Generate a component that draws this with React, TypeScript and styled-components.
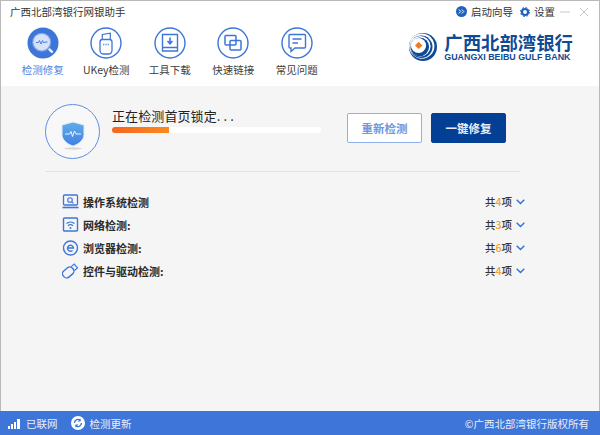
import React from 'react';
import styled, { createGlobalStyle } from 'styled-components';

const GlobalStyle = createGlobalStyle`
  html, body {
    margin: 0;
    padding: 0;
    background: #fff;
  }
  * {
    box-sizing: border-box;
  }
`;

const FONT = `"Noto Sans CJK SC", "Liberation Sans", sans-serif`;
const BLUE = '#3e75d9';

const Window = styled.div`
  width: 600px;
  height: 435px;
  display: flex;
  flex-direction: column;
  font-family: ${FONT};
  color: #333;
  background: #fff;
  border: 1px solid #b9b9b9;
  border-bottom: 0;
`;

const Header = styled.header`
  height: 85px;
  display: flex;
  flex-direction: column;
  flex-shrink: 0;
`;

const TitleBar = styled.div`
  height: 21px;
  display: flex;
  align-items: center;
  justify-content: space-between;
  padding: 0 10px 0 9px;
`;

const Title = styled.div`
  font-size: 10.5px;
  color: #333;
`;

const Controls = styled.div`
  display: flex;
  align-items: center;
`;

const ControlLink = styled.div`
  display: flex;
  align-items: center;
  gap: 4px;
  font-size: 10.5px;
  margin-right: 7px;
`;

const WindowButtons = styled.div`
  display: flex;
  gap: 9px;
  margin-left: -2px;
`;

const WindowButton = styled.svg`
  width: 10px;
  height: 10px;
  display: block;
`;

const ToolRow = styled.div`
  flex: 1;
  display: flex;
  justify-content: space-between;
`;

const Nav = styled.nav`
  display: flex;
  padding-left: 10px;
  padding-top: 5px;
`;

const NavItem = styled.div<{ $active?: boolean }>`
  width: 63.5px;
  display: flex;
  flex-direction: column;
  align-items: center;
  gap: 5px;
  font-size: 10.5px;
  line-height: 12px;
  color: ${(p) => (p.$active ? '#4f82dd' : '#3d3d3d')};
`;

const NavCircle = styled.svg`
  width: 32px;
  height: 32px;
  display: block;
`;

const Logo = styled.div`
  display: flex;
  align-items: flex-start;
  gap: 7px;
  padding: 11px 26px 0 0;
`;

const LogoText = styled.div`
  display: flex;
  flex-direction: column;
  color: #0f4a94;
`;

const LogoCn = styled.div`
  font-size: 18.4px;
  line-height: 18px;
  height: 18px;
  font-weight: 700;
  white-space: nowrap;
`;

const LogoEn = styled.div`
  font-family: "Liberation Sans", sans-serif;
  font-size: 8.9px;
  line-height: 10px;
  margin-top: 1px;
  font-weight: 700;
  white-space: nowrap;
`;

const Main = styled.main`
  flex: 1;
  background: #f5f5f5;
  padding: 18px 79px 0 44px;
`;

const StatusRow = styled.section`
  display: flex;
  align-items: flex-start;
  padding-bottom: 12px;
  border-bottom: 1px solid #e4e4e4;
`;

const Badge = styled.div`
  width: 55px;
  height: 55px;
  border-radius: 50%;
  border: 1.5px solid #5c8fe6;
  background: #f8f8f8;
  display: flex;
  align-items: center;
  justify-content: center;
  flex-shrink: 0;
`;

const ShieldIcon = styled.svg`
  display: block;
  margin-top: 5px;
`;

const Progress = styled.div`
  width: 209px;
  margin-left: 12px;
  padding-top: 3px;
`;

const ProgressLabel = styled.div`
  font-size: 13px;
  line-height: 18px;
  color: #222;
  letter-spacing: 0.1px;
  white-space: nowrap;
`;

const Track = styled.div`
  margin-top: 2px;
  height: 6px;
  border-radius: 3px;
  background: #fff;
  overflow: hidden;
`;

const Fill = styled.div`
  height: 100%;
  background: linear-gradient(90deg, #f4661f, #fb8a1f);
`;

const Buttons = styled.div`
  margin-left: 26px;
  padding-top: 9px;
  display: flex;
  gap: 9px;
`;

const Button = styled.button<{ $primary?: boolean }>`
  width: 75px;
  height: 30px;
  padding: 0;
  border-radius: 2px;
  font-family: ${FONT};
  font-size: 11.5px;
  font-weight: 700;
  color: ${(p) => (p.$primary ? '#e8ecf5' : '#6f97dc')};
  background: ${(p) => (p.$primary ? '#043f96' : '#fff')};
  border: 1px solid ${(p) => (p.$primary ? '#043f96' : '#8fb0ea')};
`;

const CheckList = styled.ul`
  list-style: none;
  margin: 18px -5px 0 17px;
  padding: 0;
`;

const CheckRow = styled.li`
  height: 23px;
  display: flex;
  align-items: center;
  font-size: 10.5px;
`;

const CheckIcon = styled.svg`
  width: 17px;
  height: 17px;
  margin-right: 4px;
  flex-shrink: 0;
  display: block;
`;

const CheckName = styled.div`
  flex: 1;
  font-size: 11px;
  font-weight: 700;
  color: #2b2b2b;
`;

const Count = styled.div`
  color: #333;
  font-weight: 500;
`;

const CountNum = styled.span`
  color: #fba02c;
`;

const Chevron = styled.svg`
  width: 9px;
  height: 6px;
  margin-left: 4px;
  display: block;
`;

const Footer = styled.footer`
  height: 24px;
  flex-shrink: 0;
  margin: 0 -1px;
  background: ${BLUE};
  color: #e9effa;
  display: flex;
  align-items: center;
  justify-content: space-between;
  padding: 0 11px 0 8px;
  font-size: 10.5px;
`;

const FooterGroup = styled.div`
  display: flex;
  align-items: center;
`;

const FooterIcon = styled.svg<{ $left?: number }>`
  display: block;
  margin-left: ${(p) => p.$left || 0}px;
  margin-right: 5px;
`;

const navIcons: React.ReactNode[] = [
  <>
    <circle cx="16" cy="16" r="15.500" fill={BLUE} />
    <circle cx="14.700" cy="15.200" r="9.500" fill="#fff" opacity="0.35" />
    <circle cx="14.700" cy="15.200" r="8.300" fill="#d5e2f8" />
    <path d="M9 15.500h2.500l1-2 1.500 3.500 1.500-3.500 1.500 2.500 1-1h2.500" fill="none" stroke={BLUE} strokeWidth="0.900" />
    <path d="M22.500 22.500l2.500 2.300" stroke="#eef3fc" strokeWidth="2.400" strokeLinecap="round" />
  </>,
  <>
    <circle cx="16" cy="16" r="15" fill="none" stroke={BLUE} strokeWidth="1.400" />
    <path d="M12.300 12.500V7.500l8-1.300v6.300" fill="none" stroke={BLUE} strokeWidth="1.200" />
    <path d="M10 15a2.500 2.500 0 0 1 2.500-2.500h7A2.500 2.500 0 0 1 22 15v8.500a3.500 3.500 0 0 1-3.500 3.500h-5a3.500 3.500 0 0 1-3.500-3.500z" fill="none" stroke={BLUE} strokeWidth="1.300" />
    <path d="M13 17.500h6" stroke={BLUE} strokeWidth="1.600" strokeDasharray="1 0.700" opacity="0.8" />
  </>,
  <>
    <circle cx="16" cy="16" r="15" fill="none" stroke={BLUE} strokeWidth="1.400" />
    <path d="M8.500 7.500h15v16.500h-15zM8.500 20.500h15" fill="none" stroke={BLUE} strokeWidth="1.400" />
    <path d="M16 10.500v5.500M13.500 14l2.500 2.800 2.500-2.800" fill="none" stroke={BLUE} strokeWidth="1.600" />
  </>,
  <>
    <circle cx="16" cy="16" r="15" fill="none" stroke={BLUE} strokeWidth="1.400" />
    <rect x="8" y="8.500" width="11" height="9.500" rx="1" fill="none" stroke={BLUE} strokeWidth="1.500" />
    <rect x="13" y="13.500" width="11" height="9.500" rx="1" fill="none" stroke={BLUE} strokeWidth="1.500" />
  </>,
  <>
    <circle cx="16" cy="16" r="15" fill="none" stroke={BLUE} strokeWidth="1.400" />
    <path d="M9 7.500h14.500a1 1 0 0 1 1 1V20a1 1 0 0 1-1 1H14l-4 3.500V21H9a1 1 0 0 1-1-1V8.500a1 1 0 0 1 1-1z" fill="none" stroke={BLUE} strokeWidth="1.400" />
    <path d="M11.500 12h9M11.500 16h5.500" stroke={BLUE} strokeWidth="1.400" />
  </>,
];

const navLabels = ['检测修复', 'UKey检测', '工具下载', '快速链接', '常见问题'];

const checks: { name: string; count: number; icon: React.ReactNode }[] = [
  {
    name: '操作系统检测',
    count: 4,
    icon: (
      <>
        <rect x="1.500" y="2" width="14" height="10" rx="1" fill="none" stroke={BLUE} strokeWidth="1.300" />
        <circle cx="8" cy="7" r="2.300" fill="none" stroke={BLUE} strokeWidth="1.100" />
        <path d="M9.800 8.800l1.700 1.500" stroke={BLUE} strokeWidth="1.100" />
        <path d="M0.500 14.500h16" stroke={BLUE} strokeWidth="1.600" />
      </>
    ),
  },
  {
    name: '网络检测:',
    count: 3,
    icon: (
      <>
        <rect x="1.500" y="2" width="14" height="13" rx="1" fill="none" stroke={BLUE} strokeWidth="1.400" />
        <path d="M4.500 7.500c2.300-2 5.700-2 8 0M6 9.700c1.500-1.200 3.500-1.200 5 0" fill="none" stroke={BLUE} strokeWidth="1.200" />
        <circle cx="8.500" cy="12" r="1" fill={BLUE} />
      </>
    ),
  },
  {
    name: '浏览器检测:',
    count: 6,
    icon: (
      <>
        <circle cx="8.500" cy="9" r="7" fill="none" stroke={BLUE} strokeWidth="1.400" />
        <path d="M5.500 9h6a3 3 0 1 0-1 2.500" fill="none" stroke={BLUE} strokeWidth="1.400" />
      </>
    ),
  },
  {
    name: '控件与驱动检测:',
    count: 4,
    icon: (
      <g transform="rotate(50 8.500 8.500)">
        <rect x="4.500" y="5.500" width="8" height="12" rx="3.500" fill="none" stroke={BLUE} strokeWidth="1.400" />
        <path d="M6 5.500V1.500h5v4" fill="none" stroke={BLUE} strokeWidth="1.200" />
      </g>
    ),
  },
];

function App() {
  return (
    <>
      <GlobalStyle />
      <Window>
        <Header>
          <TitleBar>
            <Title>广西北部湾银行网银助手</Title>
            <Controls>
              <ControlLink>
                <svg width="11" height="11" viewBox="0 0 11 11">
                  <circle cx="5.500" cy="5.500" r="5.500" fill="#1f62c0" />
                  <path d="M2.800 3.500l2 2-2 2M5.800 3.500l2 2-2 2" fill="none" stroke="#fff" strokeWidth="1" />
                </svg>
                启动向导
              </ControlLink>
              <ControlLink>
                <svg width="10" height="10" viewBox="0 0 10 10">
                  <circle cx="5" cy="5" r="3" fill="none" stroke="#1f62c0" strokeWidth="2.200" />
                  <circle cx="5" cy="5" r="4.500" fill="none" stroke="#1f62c0" strokeWidth="1" strokeDasharray="1.800 1.730" />
                </svg>
                设置
              </ControlLink>
              <WindowButtons>
                <WindowButton viewBox="0 0 10 10">
                  <path d="M0 5h10" stroke="#c9c9c9" strokeWidth="1" />
                </WindowButton>
                <WindowButton viewBox="0 0 10 10">
                  <path d="M1 1l8 8M9 1l-8 8" stroke="#c9c9c9" strokeWidth="1" />
                </WindowButton>
              </WindowButtons>
            </Controls>
          </TitleBar>
          <ToolRow>
            <Nav>
              {navLabels.map((label, i) => (
                <NavItem key={label} $active={i === 0}>
                  <NavCircle viewBox="0 0 32 32">{navIcons[i]}</NavCircle>
                  {label}
                </NavItem>
              ))}
            </Nav>
            <Logo>
              <svg width="28" height="28" viewBox="0 0 28 28">
                <circle cx="14" cy="14" r="14" fill="#0f4a94" />
                <circle cx="12.800" cy="13.200" r="12.600" fill="#fff" />
                <circle cx="12.300" cy="13.800" r="11.200" fill="#0f4a94" />
                <circle cx="11.300" cy="13.200" r="10.300" fill="#fff" />
                <circle cx="10.800" cy="13.800" r="9.300" fill="#0f4a94" />
                <circle cx="9.500" cy="12.500" r="7.600" fill="#fff" />
                <path d="M9.700 8.700l3.700 3.700-3.700 3.700-3.700-3.700z" fill="#ee7a22" />
              </svg>
              <LogoText>
                <LogoCn>广西北部湾银行</LogoCn>
                <LogoEn>GUANGXI BEIBU GULF BANK</LogoEn>
              </LogoText>
            </Logo>
          </ToolRow>
        </Header>
        <Main>
          <StatusRow>
            <Badge>
              <ShieldIcon width="26" height="32" viewBox="0 0 26 32">
                <defs>
                  <linearGradient id="shield" x1="0" y1="0" x2="0" y2="1">
                    <stop offset="0" stopColor="#63ade9" />
                    <stop offset="1" stopColor="#3f80e4" />
                  </linearGradient>
                </defs>
                <ellipse cx="13" cy="30.500" rx="9" ry="1.200" fill="#d8d8d8" />
                <path d="M13 4l11 3v9.500C24 22 19 26 13 28 7 26 2 22 2 16.500V7z" fill="url(#shield)" stroke="#e0ebf8" strokeWidth="1" />
                <path d="M5 16h4.500l1.500-2.500 1.500 5 2-5.500 1.500 3h5" fill="none" stroke="#fff" strokeWidth="0.900" />
              </ShieldIcon>
            </Badge>
            <Progress>
              <ProgressLabel>正在检测首页锁定. . .</ProgressLabel>
              <Track>
                <Fill style={{ width: `${(57 / 209) * 100}%` }} />
              </Track>
            </Progress>
            <Buttons>
              <Button>重新检测</Button>
              <Button $primary>一键修复</Button>
            </Buttons>
          </StatusRow>
          <CheckList>
            {checks.map((c) => (
              <CheckRow key={c.name}>
                <CheckIcon viewBox="0 0 17 17">{c.icon}</CheckIcon>
                <CheckName>{c.name}</CheckName>
                <Count>
                  共<CountNum>{c.count}</CountNum>项
                </Count>
                <Chevron viewBox="0 0 9 6">
                  <path d="M0.700 0.800L4.500 4.500 8.300 0.800" fill="none" stroke="#2f6fdc" strokeWidth="1.400" />
                </Chevron>
              </CheckRow>
            ))}
          </CheckList>
        </Main>
        <Footer>
          <FooterGroup>
            <FooterIcon width="13" height="11" viewBox="0 0 13 11">
              <path d="M0 8h2v3H0zM3 6h2v5H3zM6 4h2v7H6zM9 1h3v10H9z" fill="#fff" />
            </FooterIcon>
            已联网
            <FooterIcon $left={13} width="14" height="14" viewBox="0 0 14 14">
              <circle cx="7" cy="7" r="7" fill="#fff" />
              <path d="M3.500 7a3.500 3.500 0 0 1 6-2.500M10.500 7a3.500 3.500 0 0 1-6 2.500" fill="none" stroke={BLUE} strokeWidth="1.400" />
              <path d="M9.500 2.500v3h-3zM4.500 11.500v-3h3z" fill={BLUE} />
            </FooterIcon>
            检测更新
          </FooterGroup>
          <div>©广西北部湾银行版权所有</div>
        </Footer>
      </Window>
    </>
  );
}

export default App;
